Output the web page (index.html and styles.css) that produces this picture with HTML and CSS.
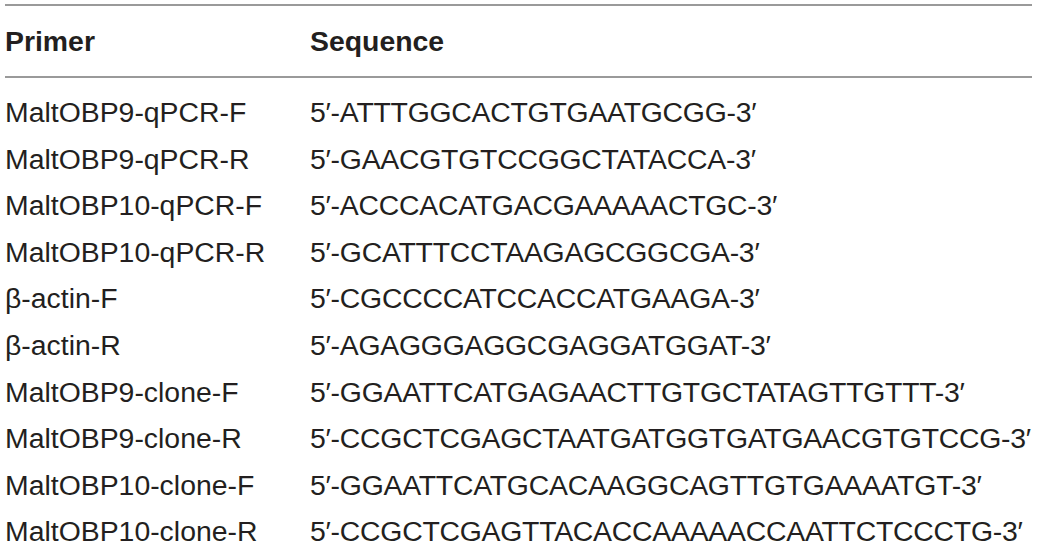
FILE: index.html
```html
<!DOCTYPE html>
<html>
<head>
<meta charset="utf-8">
<link rel="stylesheet" href="styles.css">
</head>
<body>
<table class="primers">
  <thead>
    <tr><th class="col-primer">Primer</th><th>Sequence</th></tr>
  </thead>
  <tbody>
    <tr><td>MaltOBP9-qPCR-F</td><td class="seq">5′-ATTTGGCACTGTGAATGCGG-3′</td></tr>
    <tr><td>MaltOBP9-qPCR-R</td><td class="seq">5′-GAACGTGTCCGGCTATACCA-3′</td></tr>
    <tr><td>MaltOBP10-qPCR-F</td><td class="seq">5′-ACCCACATGACGAAAAACTGC-3′</td></tr>
    <tr><td>MaltOBP10-qPCR-R</td><td class="seq">5′-GCATTTCCTAAGAGCGGCGA-3′</td></tr>
    <tr><td>β-actin-F</td><td class="seq">5′-CGCCCCATCCACCATGAAGA-3′</td></tr>
    <tr><td>β-actin-R</td><td class="seq">5′-AGAGGGAGGCGAGGATGGAT-3′</td></tr>
    <tr><td>MaltOBP9-clone-F</td><td class="seq">5′-GGAATTCATGAGAACTTGTGCTATAGTTGTTT-3′</td></tr>
    <tr><td>MaltOBP9-clone-R</td><td class="seq">5′-CCGCTCGAGCTAATGATGGTGATGAACGTGTCCG-3′</td></tr>
    <tr><td>MaltOBP10-clone-F</td><td class="seq">5′-GGAATTCATGCACAAGGCAGTTGTGAAAATGT-3′</td></tr>
    <tr><td>MaltOBP10-clone-R</td><td class="seq">5′-CCGCTCGAGTTACACCAAAAACCAATTCTCCCTG-3′</td></tr>
  </tbody>
</table>
</body>
</html>
```
FILE: styles.css
```css
html, body {
  margin: 0;
  padding: 0;
  background: #ffffff;
}
body {
  padding: 4px 7px 0 5px;
  font-family: "Liberation Sans", Arial, Helvetica, sans-serif;
  color: #231f20;
}
.primers {
  width: 100%;
  border-collapse: collapse;
  font-size: 28.4px;
}
.primers th {
  text-align: left;
  font-weight: bold;
  height: 70px;
  padding: 0;
  border-top: 2px solid #9a9a9a;
  border-bottom: 2px solid #9a9a9a;
  vertical-align: middle;
}
.primers .col-primer {
  width: 305px;
}
.primers td {
  padding: 0;
  line-height: 46.6px;
  vertical-align: top;
  white-space: nowrap;
}
.primers .seq {
  letter-spacing: -0.25px;
}
.primers tbody tr:first-child td {
  padding-top: 11px;
}
```
